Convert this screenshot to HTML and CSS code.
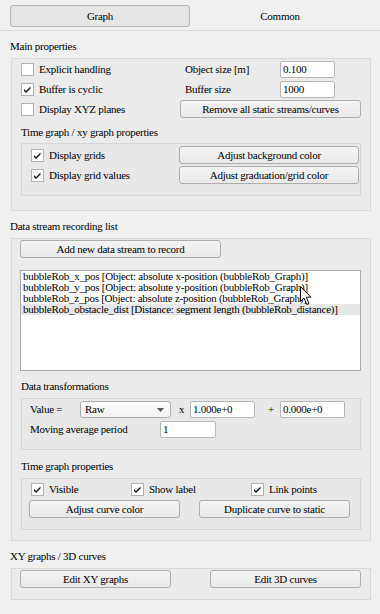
FILE: index.html
```html
<!DOCTYPE html>
<html>
<head>
<meta charset="utf-8">
<link rel="stylesheet" href="styles.css">
</head>
<body>
<div class="tabs">
  <div class="tab active">Graph</div>
  <div class="tab">Common</div>
</div>
<div class="page">
  <div class="label">Main properties</div>
  <div class="group g-main">
    <div class="main-grid">
      <label class="check"><span class="box"></span>Explicit handling</label>
      <span class="field-label">Object size [m]</span>
      <span class="input">0.100</span>
      <span></span>
      <label class="check"><span class="box"><svg viewBox="0 0 11 11" class="tick"><path d="M2 5 L4 7 L8.5 2.5 L8.5 4.5 L4 9 L2 7 Z"/></svg></span>Buffer is cyclic</label>
      <span class="field-label">Buffer size</span>
      <span class="input">1000</span>
      <span></span>
      <label class="check"><span class="box"></span>Display XYZ planes</label>
      <button class="btn span3">Remove all static streams/curves</button>
    </div>
    <div class="label sub">Time graph / xy graph properties</div>
    <div class="inner inner-grid">
      <label class="check"><span class="box"><svg viewBox="0 0 11 11" class="tick"><path d="M2 5 L4 7 L8.5 2.5 L8.5 4.5 L4 9 L2 7 Z"/></svg></span>Display grids</label>
      <button class="btn">Adjust background color</button>
      <label class="check"><span class="box"><svg viewBox="0 0 11 11" class="tick"><path d="M2 5 L4 7 L8.5 2.5 L8.5 4.5 L4 9 L2 7 Z"/></svg></span>Display grid values</label>
      <button class="btn">Adjust graduation/grid color</button>
    </div>
  </div>

  <div class="label">Data stream recording list</div>
  <div class="group g-data">
    <button class="btn add-btn">Add new data stream to record</button>
    <div class="list">
      <div class="item">bubbleRob_x_pos [Object: absolute x-position (bubbleRob_Graph)]</div>
      <div class="item">bubbleRob_y_pos [Object: absolute y-position (bubbleRob_Graph)]</div>
      <div class="item">bubbleRob_z_pos [Object: absolute z-position (bubbleRob_Graph)]</div>
      <div class="item selected">bubbleRob_obstacle_dist [Distance: segment length (bubbleRob_distance)]</div>
      <svg class="cursor" viewBox="0 0 13 20" width="13" height="20"><path d="M0.5 0.5 L0.5 15.5 L4 12 L6.8 18.5 L9 17.5 L6.3 11.2 L11 11.2 Z" fill="#fff" stroke="#000" stroke-width="1"/></svg>
    </div>
    <div class="label sub">Data transformations</div>
    <div class="inner transform">
      <div class="row">
        <span class="value-label">Value =</span>
        <span class="combo">Raw<svg class="arrow" viewBox="0 0 7 4" width="7" height="4"><path d="M0 0 L7 0 L3.5 4 Z" fill="#5a5a5a"/></svg></span>
        <span class="op op-x">x</span>
        <span class="input w65">1.000e+0</span>
        <span class="op op-plus">+</span>
        <span class="input w65">0.000e+0</span>
      </div>
      <div class="row">
        <span class="avg-label">Moving average period</span>
        <span class="input w56">1</span>
      </div>
    </div>
    <div class="label sub tgp">Time graph properties</div>
    <div class="inner timeprops">
      <div class="row checks">
        <label class="check c1"><span class="box"><svg viewBox="0 0 11 11" class="tick"><path d="M2 5 L4 7 L8.5 2.5 L8.5 4.5 L4 9 L2 7 Z"/></svg></span>Visible</label>
        <label class="check c2"><span class="box"><svg viewBox="0 0 11 11" class="tick"><path d="M2 5 L4 7 L8.5 2.5 L8.5 4.5 L4 9 L2 7 Z"/></svg></span>Show label</label>
        <label class="check"><span class="box"><svg viewBox="0 0 11 11" class="tick"><path d="M2 5 L4 7 L8.5 2.5 L8.5 4.5 L4 9 L2 7 Z"/></svg></span>Link points</label>
      </div>
      <div class="row btns">
        <button class="btn w151">Adjust curve color</button>
        <button class="btn w151">Duplicate curve to static</button>
      </div>
    </div>
  </div>

  <div class="label">XY graphs / 3D curves</div>
  <div class="group g-xy">
    <button class="btn w151">Edit XY graphs</button>
    <button class="btn w151">Edit 3D curves</button>
  </div>
</div>
</body>
</html>
```

FILE: styles.css
```css
* { box-sizing: border-box; }
html, body { margin: 0; padding: 0; }
body {
  width: 380px;
  height: 614px;
  background: #f0f0f0;
  font-family: "Liberation Serif", "Times New Roman", serif;
  font-size: 11px;
  letter-spacing: -0.25px;
  color: #000;
  overflow: hidden;
}
.tabs {
  display: flex;
  height: 31px;
  padding: 5px 0 0 10px;
  border-bottom: 1px solid #d9d9d9;
}
.tab {
  width: 180px;
  height: 22px;
  display: flex;
  align-items: center;
  justify-content: center;
}
.tab.active {
  background: #e6e6e6;
  border: 1px solid #b5b5b5;
  border-radius: 3px;
}
.page { padding: 0 9px 0 11px; }
.label {
  line-height: 16px;
  height: 16px;
  margin: 7px 0 4px -1px;
}
.label.sub { margin: 5px 0 3px 1px; }
.group {
  border: 1px solid #d9d9d9;
  background: #ebebeb;
  padding: 0 9px 14px 8px;
}
.main-grid {
  display: grid;
  grid-template-columns: 160px 100px 55px 26px;
  grid-auto-rows: 20px;
  align-items: center;
}
.span3 { grid-column: 2 / 5; }
.field-label { padding-left: 5px; }
.check {
  display: flex;
  align-items: center;
  gap: 5px;
}
.box {
  width: 13px;
  height: 13px;
  margin-left: 1px;
  background: #fff;
  border: 1px solid #b3b3b3;
  display: flex;
  align-items: center;
  justify-content: center;
  flex: none;
}
.tick { width: 11px; height: 11px; fill: #1a1a1a; }
.input {
  display: flex;
  align-items: center;
  height: 17px;
  background: #fff;
  border: 1px solid #b6b6b6;
  border-radius: 2px;
  padding-left: 2px;
}
.btn {
  font: inherit;
  letter-spacing: inherit;
  color: #000;
  height: 18px;
  padding: 0;
  background: linear-gradient(#f4f4f4, #e9e9e9);
  border: 1px solid #adadad;
  border-radius: 3px;
  display: flex;
  align-items: center;
  justify-content: center;
}
.inner {
  margin-left: 1px;
  border: 1px solid #d6d6d6;
  background: #e8e8e8;
}
.inner-grid {
  display: grid;
  grid-template-columns: 149px 180px;
  grid-auto-rows: 20px;
  align-items: center;
  padding: 1px 0 10px 8px;
}
.g-data { padding-top: 1px; padding-bottom: 10px; }
.add-btn { width: 201px; }
.list {
  position: relative;
  margin-top: 12px;
  height: 101px;
  background: #fff;
  border: 1px solid #a9a9a9;
  padding-top: 0;
}
.item {
  line-height: 11px;
  height: 11px;
  padding-left: 2px;
  white-space: nowrap;
}
.item.selected { background: #e7e7e7; }
.cursor {
  position: absolute;
  left: 279px;
  top: 15px;
}
.label.tgp { margin-top: 8px; margin-bottom: 4px; }
.g-data .label.sub { margin-top: 7px; margin-bottom: 4px; }
.g-data .label.tgp { margin-top: 8px; }
.transform { padding: 0 0 10px 8px; }
.row {
  display: flex;
  align-items: center;
  height: 20px;
}
.value-label { width: 50px; }
.combo {
  position: relative;
  display: flex;
  align-items: center;
  width: 91px;
  height: 17px;
  padding-left: 4px;
  background: linear-gradient(#fefefe, #f2f2f2);
  border: 1px solid #adadad;
  border-radius: 3px;
}
.arrow { position: absolute; left: 76px; top: 6px; }
.op-x { width: 19px; padding-left: 8px; }
.op-plus { width: 25px; padding-left: 13px; }
.w65 { width: 65px; }
.w56 { width: 56px; }
.avg-label { width: 130px; }
.timeprops { padding: 0 0 10px 8px; }
.checks .c1 { width: 100px; }
.checks .c2 { width: 120px; }
.btns { margin-left: -1px; gap: 19px; }
.w151 { width: 151px; }
.g-xy {
  display: flex;
  justify-content: space-between;
  padding: 1px 9px 11px 8px;
}
```
